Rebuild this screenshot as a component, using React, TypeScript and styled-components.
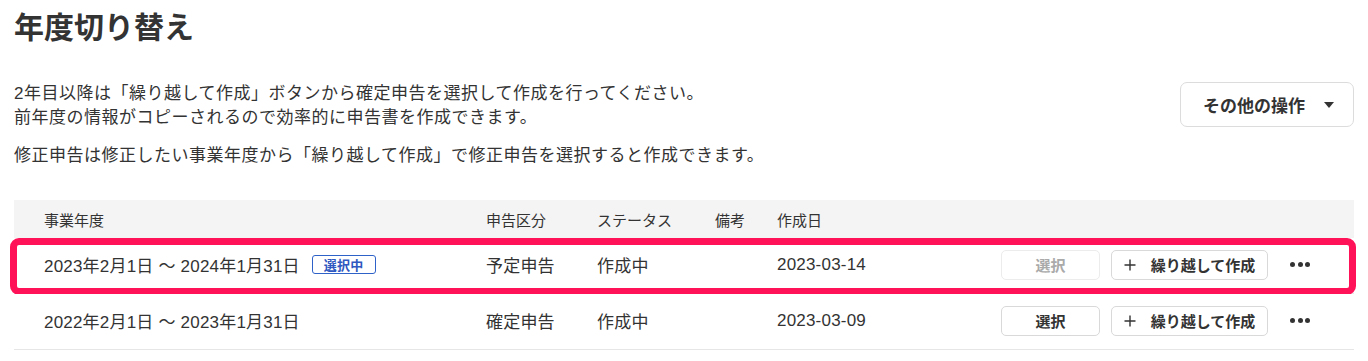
import React from 'react';
import styled, { createGlobalStyle } from 'styled-components';

const GlobalStyle = createGlobalStyle`
  html, body {
    margin: 0;
    padding: 0;
    background: #fff;
  }
  body {
    font-family: "Liberation Sans", "Noto Sans CJK JP", sans-serif;
    color: #333;
  }
`;

const Page = styled.div`
  padding: 6px 14px 0;
`;

const Title = styled.h1`
  margin: 0 0 32px;
  font-size: 30px;
  line-height: 44px;
  font-weight: 700;
  color: #333;
`;

const IntroRow = styled.div`
  display: flex;
  justify-content: space-between;
  align-items: flex-start;
`;

const Intro = styled.div`
  display: flex;
  flex-direction: column;
  gap: 14px;
`;

const Paragraph = styled.p`
  margin: 0;
  font-size: 17px;
  line-height: 24px;
  letter-spacing: 0.5px;
`;

const MenuButton = styled.button`
  display: flex;
  align-items: center;
  gap: 19px;
  height: 45px;
  padding: 0 19px 0 22px;
  border: 1px solid #dcdcdc;
  border-radius: 7px;
  background: #fff;
  font-family: inherit;
  font-size: 17px;
  font-weight: 700;
  color: #333;
`;

const Caret = styled.span`
  width: 0;
  height: 0;
  border-left: 5.5px solid transparent;
  border-right: 5.5px solid transparent;
  border-top: 6px solid #333;
`;

const Table = styled.div`
  margin-top: 32px;
`;

const Row = styled.div<{ $head?: boolean; $active?: boolean }>`
  position: relative;
  display: grid;
  grid-template-columns: 442px 111px 118px 62px 1fr auto;
  align-items: center;
  height: ${(p) => (p.$head ? '38px' : '56px')};
  padding-left: 30px;
  padding-right: 36px;
  padding-bottom: ${(p) => (p.$head ? '0' : '2px')};
  box-sizing: ${(p) => (p.$head ? 'content-box' : 'border-box')};
  background: ${(p) => (p.$head ? '#f5f4f4' : '#fff')};
  border-bottom: ${(p) => (p.$head ? 'none' : '1px solid #e6e6e6')};
  font-size: ${(p) => (p.$head ? '15px' : '17px')};
  letter-spacing: ${(p) => (p.$head ? '0' : '0.2px')};

  ${(p) =>
    p.$active &&
    `
    &::after {
      content: '';
      position: absolute;
      top: 0;
      bottom: -2px;
      left: -4px;
      right: -2px;
      border: 7px solid #ff1257;
      border-radius: 9px;
      pointer-events: none;
    }
  `}
`;

const Cell = styled.div`
  display: flex;
  align-items: center;
  white-space: nowrap;
`;

const Badge = styled.span`
  margin-left: 12px;
  height: 19px;
  padding: 0 11px;
  display: inline-flex;
  align-items: center;
  border: 1px solid #2f62c8;
  border-radius: 3px;
  color: #2f58c0;
  font-size: 13px;
  font-weight: 700;
  letter-spacing: 0.3px;
  box-sizing: border-box;
`;

const Actions = styled.div`
  display: flex;
  align-items: center;
  gap: 11px;
  letter-spacing: 0;
`;

const SmallButton = styled.button<{ $width: number }>`
  display: flex;
  align-items: center;
  justify-content: center;
  gap: 15px;
  width: ${(p) => p.$width}px;
  height: 30px;
  padding: 0;
  border: 1px solid ${(p) => (p.disabled ? '#ececec' : '#d9d9d9')};
  border-radius: 5px;
  background: #fff;
  font-family: inherit;
  font-size: 15px;
  font-weight: 700;
  color: ${(p) => (p.disabled ? '#aaa' : '#333')};
`;

const MoreButton = styled.button`
  display: flex;
  align-items: center;
  justify-content: center;
  gap: 2.5px;
  width: 36px;
  height: 30px;
  margin-left: 3px;
  padding: 0;
  border: none;
  background: transparent;
`;

const Dot = styled.span`
  width: 5px;
  height: 5px;
  border-radius: 50%;
  background: #333;
`;

const PlusIcon = () => (
  <svg width="12" height="12" viewBox="0 0 12 12" fill="none">
    <path d="M6 0.5v11M0.5 6h11" stroke="#333" strokeWidth="1.4" />
  </svg>
);

const years = [
  { period: '2023年2月1日 ～ 2024年1月31日', type: '予定申告', status: '作成中', date: '2023-03-14', current: true },
  { period: '2022年2月1日 ～ 2023年1月31日', type: '確定申告', status: '作成中', date: '2023-03-09', current: false },
];

export default function App() {
  return (
    <Page>
      <GlobalStyle />
      <Title>年度切り替え</Title>
      <IntroRow>
        <Intro>
          <Paragraph>
            2年目以降は「繰り越して作成」ボタンから確定申告を選択して作成を行ってください。
            <br />
            前年度の情報がコピーされるので効率的に申告書を作成できます。
          </Paragraph>
          <Paragraph>修正申告は修正したい事業年度から「繰り越して作成」で修正申告を選択すると作成できます。</Paragraph>
        </Intro>
        <MenuButton>
          その他の操作
          <Caret />
        </MenuButton>
      </IntroRow>

      <Table>
        <Row $head>
          <Cell>事業年度</Cell>
          <Cell>申告区分</Cell>
          <Cell>ステータス</Cell>
          <Cell>備考</Cell>
          <Cell>作成日</Cell>
          <Cell />
        </Row>
        {years.map((y) => (
          <Row key={y.period} $active={y.current}>
            <Cell>
              {y.period}
              {y.current && <Badge>選択中</Badge>}
            </Cell>
            <Cell>{y.type}</Cell>
            <Cell>{y.status}</Cell>
            <Cell />
            <Cell>{y.date}</Cell>
            <Actions>
              <SmallButton $width={99} disabled={y.current}>
                選択
              </SmallButton>
              <SmallButton $width={157}>
                <PlusIcon />
                繰り越して作成
              </SmallButton>
              <MoreButton>
                <Dot />
                <Dot />
                <Dot />
              </MoreButton>
            </Actions>
          </Row>
        ))}
      </Table>
    </Page>
  );
}
